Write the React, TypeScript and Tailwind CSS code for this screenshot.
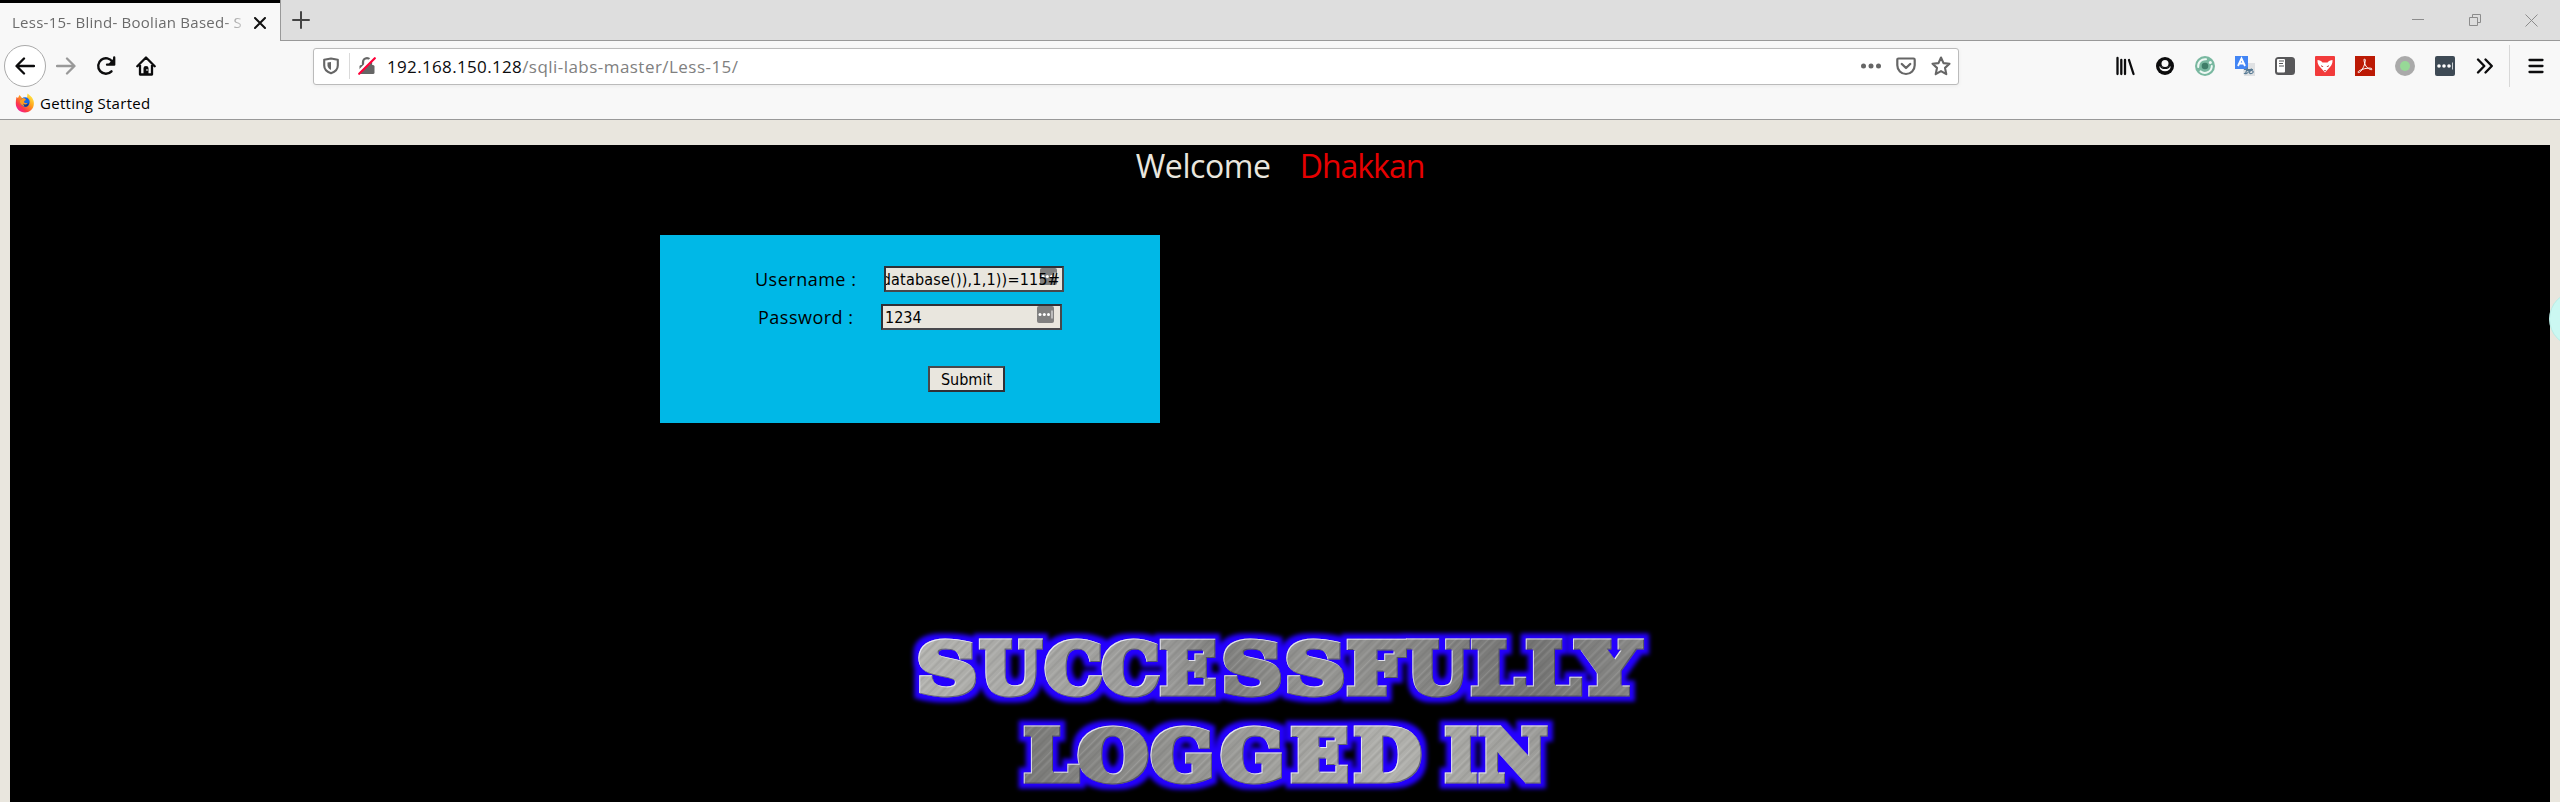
import React from "react";

const ui = "font-['Open_Sans','Noto_Sans',sans-serif]";

function Svg({ children, className = "size-5", box = "0 0 20 20" }: { children: React.ReactNode; className?: string; box?: string }) {
  return (
    <svg viewBox={box} className={`${className} shrink-0`} fill="none">
      {children}
    </svg>
  );
}

function TabBar() {
  return (
    <div className="flex h-[41px] shrink-0 items-start">
      <div className="flex h-[41px] w-[280px] items-center border-t-[3px] border-black bg-[#f8f8f8] pl-3">
        <div className="w-[242px] whitespace-nowrap text-[15px] leading-5 tracking-[0.25px] text-[#6b6b6b] [mask-image:linear-gradient(to_right,black_212px,transparent_238px)]">
          Less-15- Blind- Boolian Based- S
        </div>
        <Svg className="mt-[2px] size-3" box="0 0 12 12">
          <path d="M1 1l10 10M11 1L1 11" stroke="#111" strokeWidth="2" strokeLinecap="round" />
        </Svg>
      </div>
      <div className="flex h-[41px] flex-1 items-center border-b border-l border-[#999] bg-[#dedede] pl-[11px]">
        <Svg className="size-[18px]" box="0 0 18 18">
          <path d="M9 1v16M1 9h16" stroke="#444" strokeWidth="2" strokeLinecap="round" />
        </Svg>
        <div className="ml-auto flex items-center gap-[45px] pr-[22px]">
          <Svg className="size-3" box="0 0 12 12">
            <path d="M0 5.5h12" stroke="#8c8c8c" />
          </Svg>
          <Svg className="size-3" box="0 0 12 12">
            <path d="M.5 3.5h8v8h-8zM3.5 3.5v-3h8v8h-3" stroke="#8c8c8c" />
          </Svg>
          <Svg className="-ml-px size-[13px]" box="0 0 13 13">
            <path d="M.5.5l12 12M12.5.5l-12 12" stroke="#8c8c8c" />
          </Svg>
        </div>
      </div>
    </div>
  );
}

function Extensions() {
  return (
    <div className="ml-auto flex items-center gap-5">
      <Svg>
        <path d="M2.500 2v16M6.300 4v14M10 4v14M14 4l4.500 14" stroke="#0c0c0d" strokeWidth="2.300" strokeLinecap="round" />
      </Svg>
      <Svg>
        <circle cx="10" cy="10" r="9" fill="#0c0c0d" />
        <path d="M4.200 10.500a5.900 5.900 0 0 0 11.600 0h-2.200c-.8 2.200-6.400 2.200-7.200 0z" fill="#f8f8f8" />
        <circle cx="10" cy="7.500" r="3.500" fill="#f8f8f8" />
        <path d="M5.500 10.200c1.500 3 7.500 3 9 0" stroke="#0c0c0d" strokeWidth="1.300" />
      </Svg>
      <Svg>
        <circle cx="10" cy="10" r="10" fill="#79b8a0" />
        <path d="M3.200 11A7 7 0 0 1 11 3.200M16.800 10A7 7 0 0 1 5.500 15.400" stroke="#eef8f4" strokeWidth="2" strokeLinecap="round" />
        <circle cx="10" cy="10" r="3.300" fill="#3f7d68" />
        <circle cx="15.300" cy="6.500" r="1.500" fill="#eef8f4" />
      </Svg>
      <Svg>
        <path d="M7 7h13v13H9z" fill="#dfe1e3" />
        <path d="M0 0h13v13H0z" fill="#4285f4" />
        <path d="M3 10L6.500 2.500 10 10M4.300 7.500h4.400" stroke="white" strokeWidth="1.800" />
        <path d="M9 13.500h9M12.500 11.500l-2 6M11 15c5-2 8 0 7 1.500-1 1.500-4 1.500-3.500 0 .3-1 1.500-2 2-4M9 17c1 1.500 5 0 5.500-3" stroke="#587b94" strokeWidth="1.100" />
      </Svg>
      <Svg>
        <rect y="1" width="20" height="18" rx="3.500" fill="#58585a" />
        <rect x="2" y="3" width="8" height="13.500" rx="1" fill="#fff" />
        <path d="M4 5h5M4 7.500h4M4 10h5" stroke="#58585a" strokeWidth="1.200" />
      </Svg>
      <Svg>
        <rect width="20" height="20" rx="1" fill="#f23b3b" />
        <path d="M2.500 4c2 0 4 1 5 2.500h5C13.500 5 15.500 4 17.500 4c.3 3-1 5.500-2.500 7l-5 5.500L5 11C3.500 9.500 2.200 7 2.500 4z" fill="#fff" />
        <path d="M6 9l2.500 1.800L6.800 11zM14 9l-2.500 1.800 1.700.2zM9 14h2l-1 1.500z" fill="#b42424" />
      </Svg>
      <Svg>
        <path d="M0 0h20v20H0z" fill="#bc1a05" />
        <path d="M9.500 3c1.300 0 .8 3-.2 6-1.300 3.600-3.800 7.500-5.800 7.600-2.200-.6 2.500-3.300 7.500-4.200 3.500-.7 6.500-.2 6 .9-.6 1.100-4-.4-6-3.200C9.500 7.900 8.300 3 9.500 3z" stroke="#fff" strokeWidth="1" />
      </Svg>
      <Svg>
        <circle cx="10" cy="10" r="10" fill="#aaa" />
        <circle cx="10" cy="10" r="5" fill="#97d997" />
      </Svg>
      <Svg>
        <rect width="20" height="20" rx="2" fill="#3e4a55" />
        <circle cx="4" cy="10" r="1.800" fill="#fff" />
        <circle cx="9" cy="10" r="1.800" fill="#fff" />
        <circle cx="14" cy="10" r="1.800" fill="#fff" />
        <path d="M17.500 6.500v7" stroke="#cbd0d4" />
      </Svg>
      <Svg>
        <path d="M3 3.500L9.300 10 3 16.500M10.500 3.500L16.800 10l-6.300 6.500" stroke="#0c0c0d" strokeWidth="2.400" strokeLinecap="round" strokeLinejoin="round" />
      </Svg>
      <div className="-ml-[6px] h-[42px] w-px bg-[#d8d8d8]" />
      <Svg className="-ml-1 size-5">
        <path d="M3.500 4h13M3.500 10h13M3.500 16h13" stroke="#0c0c0d" strokeWidth="2.300" strokeLinecap="round" />
      </Svg>
    </div>
  );
}

function NavBar() {
  return (
    <div className="flex h-[50px] items-center pl-1 pr-[14px]">
      <div className="flex size-[42px] items-center justify-center rounded-full border border-[#aaa] bg-white">
        <Svg>
          <path d="M19 10H2M9 2.500L1.500 10 9 17.500" stroke="#0c0c0d" strokeWidth="2.300" strokeLinecap="round" strokeLinejoin="round" />
        </Svg>
      </div>
      <Svg className="ml-[10px] size-5">
        <path d="M1 10h17M11 2.500l7.500 7.500-7.500 7.500" stroke="#999" strokeWidth="2.300" strokeLinecap="round" strokeLinejoin="round" />
      </Svg>
      <Svg className="ml-5 size-5">
        <path d="M15.500 15.300A7.700 7.700 0 1 1 16.500 6" stroke="#0c0c0d" strokeWidth="2.400" strokeLinecap="round" />
        <path d="M18.200 1.500v7.200H11" stroke="#0c0c0d" strokeWidth="2.300" strokeLinejoin="round" strokeLinecap="round" />
        <path d="M18 2v6.500h-6z" fill="#0c0c0d" />
      </Svg>
      <Svg className="ml-5 size-5">
        <path d="M1.300 10.300L10 1.500l8.700 8.800M4 9v9.500h12V9" stroke="#0c0c0d" strokeWidth="2.300" strokeLinecap="round" strokeLinejoin="round" />
        <path d="M7.500 18.500V12q0-2 2.500-2t2.500 2v6.500z" fill="#0c0c0d" />
        <path d="M10.500 13h1v2h-1z" fill="#fff" />
      </Svg>
      <div className="ml-[157px] flex h-[37px] w-[1646px] items-center rounded-[3px] border border-[#bbb] bg-white pl-2 pr-[7px] shadow-[0_1px_4px_rgba(0,0,0,0.06)]">
        <Svg className="size-[18px]" box="0 0 18 18">
          <path d="M9 1.500l6.800 1.300v5.700c0 4-3 6.500-6.800 7.800-3.800-1.300-6.800-3.800-6.800-7.800V2.800z" stroke="#666" strokeWidth="2.100" strokeLinejoin="round" />
          <path d="M9 5v8C6.500 11.800 5.500 10 5.500 8.200V5.600z" fill="#666" />
        </Svg>
        <div className="ml-[9px] h-[26px] w-px bg-[#dadada]" />
        <Svg className="ml-2 size-[18px]" box="0 0 18 18">
          <path d="M5 8.500V5.200a4 4 0 0 1 8 0v3.300" stroke="#666" strokeWidth="2.300" />
          <rect x="1.500" y="8" width="15" height="9" rx="1.500" fill="#666" />
          <path d="M.2 15.300L15.300.2" stroke="#fff" strokeWidth="3" />
          <path d="M1.200 16.800L16.800 1.200" stroke="#ff0039" strokeWidth="2.200" strokeLinecap="round" />
        </Svg>
        <div className="ml-[11px] whitespace-nowrap pt-px text-[17px] leading-6 tracking-[0.46px] text-[#808080]">
          <span className="tracking-[0.34px] text-[#0c0c0d]">192.168.150.128</span>/sqli-labs-master/Less-15/
        </div>
        <div className="ml-auto flex items-center gap-[15px]">
          <Svg>
            <circle cx="2.500" cy="10" r="2.500" fill="#666" />
            <circle cx="10" cy="10" r="2.500" fill="#666" />
            <circle cx="17.500" cy="10" r="2.500" fill="#666" />
          </Svg>
          <Svg>
            <path d="M2.500 2.500h15q1.200 0 1.200 1.200v5.600a8.700 8.700 0 0 1-17.400 0V3.700q0-1.200 1.200-1.200z" stroke="#666" strokeWidth="2.200" />
            <path d="M5.800 8l4.200 4 4.200-4" stroke="#666" strokeWidth="2.400" strokeLinecap="round" strokeLinejoin="round" />
          </Svg>
          <Svg>
            <path d="M10 1.500l2.500 5.600 6 .7-4.500 4.100 1.300 6.300L10 15.100l-5.300 3.100L6 11.900 1.500 7.800l6-.7z" stroke="#666" strokeWidth="2.100" strokeLinejoin="round" />
          </Svg>
        </div>
      </div>
      <Extensions />
    </div>
  );
}

function FirefoxLogo() {
  return (
    <Svg>
      <defs>
        <linearGradient id="fx" x1="1" y1="0" x2=".15" y2="1">
          <stop offset=".1" stopColor="#fff04a" />
          <stop offset=".45" stopColor="#ff9d18" />
          <stop offset=".75" stopColor="#fb3848" />
          <stop offset="1" stopColor="#f218b0" />
        </linearGradient>
      </defs>
      <path d="M1.500 4L3 5l1.500-3L7 5h5l.5-4.500L15.500 3 17 4.500l1.500 3c2 8-4 12-8.500 12-5.500 0-9.500-4-9.200-9.500C.8 8 1 6 1.500 4z" fill="url(#fx)" />
      <circle cx="10" cy="9" r="4.700" fill="#1369e8" />
      <path d="M5 7.500l3-2.500 2 .5 1 1.500-2 1 .5 2 3 .3-1 2.200-3 .5C6 12 4.500 10 5 7.500z" fill="#ff9a20" />
      <path d="M8 10.500c2 1.800 4.500 1 5.500-1 .8 3-1 5-4 4z" fill="#0a3e9c" />
    </Svg>
  );
}

function FieldBadge({ className }: { className: string }) {
  return (
    <Svg className={`absolute top-0 size-[17px] ${className}`} box="0 0 17 17">
      <rect width="17" height="17" rx="2" fill="#808080" />
      <circle cx="3" cy="8.500" r="1.500" fill="#fff" />
      <circle cx="7.300" cy="8.500" r="1.500" fill="#fff" />
      <circle cx="11.500" cy="8.500" r="1.500" fill="#fff" />
      <path d="M15 4.500v8" stroke="#ddd" strokeWidth="1.300" />
    </Svg>
  );
}

function LoginForm() {
  const field = "relative flex h-[26px] items-center overflow-hidden border-2 border-[#303036] border-b-[#48484c] border-r-[#48484c] bg-[#e9e6de] text-[16px] text-black font-['DejaVu_Sans_Condensed','DejaVu_Sans',sans-serif]";
  return (
    <form className="ml-[650px] mt-[37px] flex h-[188px] w-[500px] flex-col bg-[#00b8e7] pt-[31px] text-black">
      <div className="flex h-[26px] items-center pl-[95px]">
        <label className="w-[129px] whitespace-nowrap text-[18px] font-medium leading-6 tracking-[0.5px]">Username :</label>
        <div className={`${field} w-[180px] justify-end pr-[2px]`}>
          <FieldBadge className="right-[5px]" />
          <span className="relative whitespace-nowrap pt-[2px] leading-5 tracking-[0.2px]">database()),1,1))=115#</span>
        </div>
      </div>
      <div className="mt-3 flex h-[26px] items-center pl-[98px]">
        <label className="w-[123px] whitespace-nowrap text-[18px] font-medium leading-6 tracking-[0.5px]">Password :</label>
        <div className={`${field} w-[181px] pl-[2px]`}>
          <span className="pt-[2px] leading-5">1234</span>
          <FieldBadge className="right-[6px]" />
        </div>
      </div>
      <button type="button" className="ml-[268px] mt-9 flex h-[26px] w-[77px] items-center justify-center border-2 border-[#48484c] border-b-[#303036] border-r-[#303036] bg-[#e9e6de] pt-[2px] text-[16px] leading-5 font-['DejaVu_Sans_Condensed','DejaVu_Sans',sans-serif]">
        Submit
      </button>
    </form>
  );
}

type Glyph = [char: string, x: number, width: number];

const topWord: Glyph[] = [
  ["S", 917, 60], ["U", 980, 61], ["C", 1045, 57], ["C", 1102, 57], ["E", 1160, 56], ["S", 1222, 60],
  ["S", 1285, 60], ["F", 1347, 57], ["U", 1407, 61], ["L", 1471, 53], ["L", 1526, 54], ["Y", 1578, 61],
];
const bottomWord: Glyph[] = [
  ["L", 1024, 54], ["O", 1078, 70], ["G", 1151, 63], ["G", 1221, 63], ["E", 1291, 57], ["D", 1354, 67],
  [" ", 1422, 20], ["I", 1445, 32], ["N", 1479, 68],
];

function BannerLine({ glyphs, y }: { glyphs: Glyph[]; y: number }) {
  return (
    <text y={y} xmlSpace="preserve">
      {glyphs.map(([char, x, width]) => (
        <tspan key={x} x={x} textLength={width} lengthAdjust="spacingAndGlyphs">
          {char}
        </tspan>
      ))}
    </text>
  );
}

function SuccessBanner() {
  return (
    <svg viewBox="900 620 760 182" className="mx-auto h-[182px] w-[760px]">
      <defs>
        <linearGradient id="metalTop" x1="900" x2="1660" y1="0" y2="0" gradientUnits="userSpaceOnUse">
          <stop offset="0" stopColor="#b4b4b0" />
          <stop offset=".36" stopColor="#979795" />
          <stop offset=".42" stopColor="#7e7e7c" />
          <stop offset=".55" stopColor="#969693" />
          <stop offset=".83" stopColor="#747473" />
          <stop offset="1" stopColor="#8c8c8a" />
        </linearGradient>
        <linearGradient id="metalBottom" x1="1010" x2="1560" y1="0" y2="0" gradientUnits="userSpaceOnUse">
          <stop offset="0" stopColor="#777775" />
          <stop offset=".3" stopColor="#92928f" />
          <stop offset=".7" stopColor="#b0b0ac" />
          <stop offset="1" stopColor="#999996" />
        </linearGradient>
        <pattern id="metal" patternUnits="userSpaceOnUse" x="900" y="620" width="760" height="182" viewBox="900 620 760 182">
          <rect x="900" y="620" width="760" height="92" fill="url(#metalTop)" />
          <rect x="900" y="712" width="760" height="90" fill="url(#metalBottom)" />
          <rect x="900" y="620" width="760" height="182" fill="url(#brush)" />
        </pattern>
        <pattern id="brush" patternUnits="userSpaceOnUse" width="23" height="23" patternTransform="rotate(45)">
          <path d="M2 0v23M9.500 0v23M15 0v23" stroke="#fff" strokeOpacity=".12" strokeWidth="1.200" />
          <path d="M5 0v23M12 0v23M20 0v23" stroke="#333" strokeOpacity=".12" strokeWidth="1.200" />
        </pattern>
        <filter id="glow" filterUnits="userSpaceOnUse" x="900" y="620" width="760" height="182" colorInterpolationFilters="sRGB">
          <feMorphology in="SourceAlpha" operator="dilate" radius="5" result="fat" />
          <feGaussianBlur in="fat" stdDeviation="2" result="soft" />
          <feFlood floodColor="#2400ff" />
          <feComposite in2="soft" operator="in" result="halo" />
          <feOffset in="SourceAlpha" dx="1" dy="1" result="down" />
          <feComposite in="SourceAlpha" in2="down" operator="out" result="edge" />
          <feFlood floodColor="#f0f0ff" floodOpacity=".85" />
          <feComposite in2="edge" operator="in" result="light" />
          <feOffset in="SourceAlpha" dx="-1" dy="-1" result="up" />
          <feComposite in="SourceAlpha" in2="up" operator="out" result="edge2" />
          <feFlood floodColor="#303050" floodOpacity=".6" />
          <feComposite in2="edge2" operator="in" result="dark" />
          <feMerge>
            <feMergeNode in="halo" />
            <feMergeNode in="SourceGraphic" />
            <feMergeNode in="dark" />
            <feMergeNode in="light" />
          </feMerge>
        </filter>
      </defs>
      <g
        filter="url(#glow)"
        fill="url(#metal)"
        stroke="url(#metal)"
        strokeWidth="7"
        strokeLinejoin="miter"
        strokeMiterlimit="2"
        className="text-[70px] font-bold font-['DejaVu_Serif',serif]"
      >
        <BannerLine glyphs={topWord} y={693} />
        <BannerLine glyphs={bottomWord} y={779.5} />
      </g>
    </svg>
  );
}

export default function App() {
  return (
    <div className={`flex h-[802px] w-[2560px] flex-col overflow-hidden bg-[#e9e6de] ${ui}`}>
      <TabBar />
      <div className="flex h-[79px] shrink-0 flex-col border-b border-[#999] bg-[#f8f8f8]">
        <NavBar />
        <div className="flex h-6 items-center gap-[5px] pl-[15px]">
          <FirefoxLogo />
          <span className="text-[15px] leading-5 tracking-[0.3px] text-black">Getting Started</span>
        </div>
      </div>
      <div className="relative flex min-h-0 flex-1 flex-col pt-[25px]">
        <main className="mx-[10px] flex flex-1 flex-col bg-black">
          <h1 className="flex h-[53px] w-full justify-center gap-[29px] whitespace-nowrap text-[32px] leading-[42px]">
            <span className="tracking-[-0.4px] text-[#e9e6de]">Welcome</span>
            <span className="tracking-[-1px] text-[#e60000]">Dhakkan</span>
          </h1>
          <LoginForm />
          <div className="mt-auto flex">
            <SuccessBanner />
          </div>
        </main>
        <div className="absolute right-[-45px] top-[171px] size-14 rounded-full border border-[#b9ece6] bg-[#cbf8f2]" />
      </div>
    </div>
  );
}
